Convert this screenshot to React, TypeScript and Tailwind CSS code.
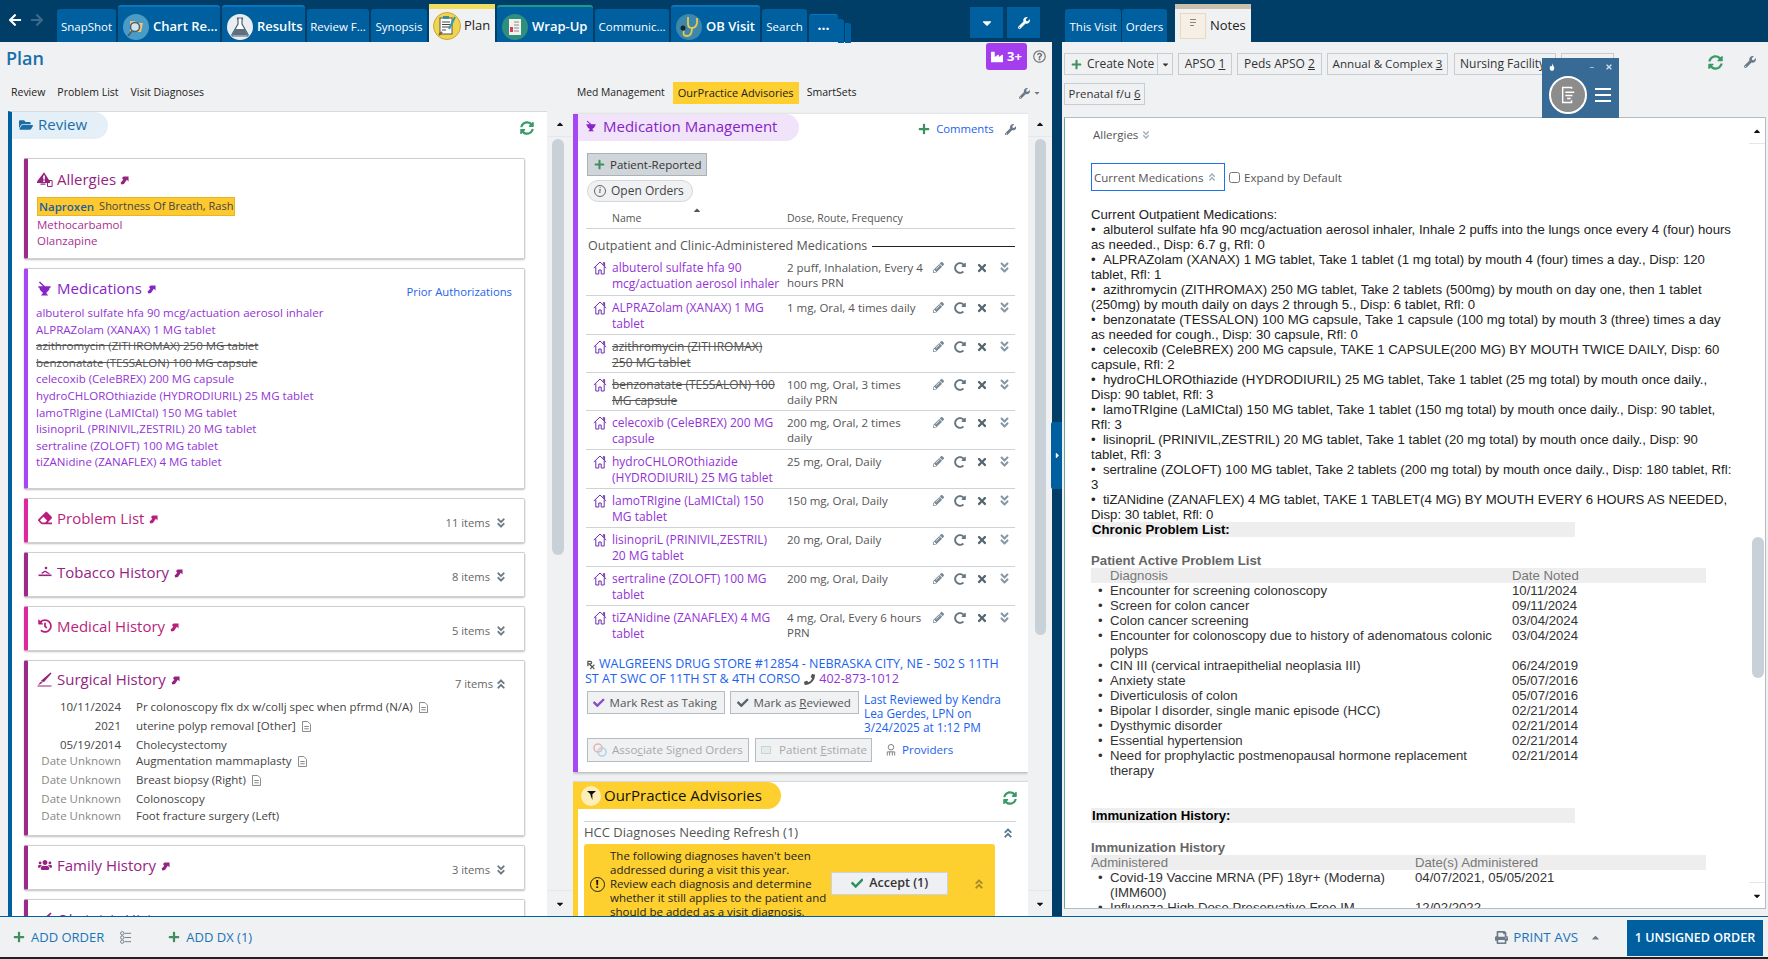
import * as React from "react";
import {
  FaPlus, FaWrench, FaPencilAlt, FaRedoAlt, FaTimes, FaAngleDoubleDown, FaAngleDoubleUp, FaSyncAlt,
  FaFolderOpen, FaCheck, FaPrint, FaPhoneAlt, FaHistory, FaUsers, FaArrowLeft, FaArrowRight, FaCaretDown,
  FaCaretUp, FaCaretRight, FaPrescription, FaEraser, FaRegQuestionCircle, FaIndustry,
} from "react-icons/fa";

const ui = "font-['Open_Sans',sans-serif]";
const arial = "font-['Liberation_Sans',Arial,sans-serif]";

function JumpArrow({ className }: { className?: string }) {
  return (
    <svg viewBox="0 0 10 10" className={`inline-block size-[9px] fill-current ${className ?? ""}`}>
      <path d="M4 0.5h5.5V6L7.6 4.2 4.4 8.8 1.6 9.5 0.6 7.5 3.6 4.1 2.2 2.3z" />
    </svg>
  );
}

function Mortar({ className }: { className?: string }) {
  return (
    <svg viewBox="0 0 14 16" className={`fill-current ${className ?? ""}`}>
      <path d="M1 1.5 2.2 0.5 7.5 5.5H13.5V7.2H12.6C12.2 9.6 10.8 11.2 9.2 11.9V13.2L11 15.5H3.2L5 13.2V11.9C3.2 11.2 1.9 9.6 1.5 7.2H0.5V5.5H5.4z" />
    </svg>
  );
}

function WarnBell({ className }: { className?: string }) {
  return (
    <svg viewBox="0 0 16 15" className={`fill-current ${className ?? ""}`}>
      <path d="M7 0.3 13 9.5V11H0V9.5z" />
      <rect x="6.2" y="3.5" width="1.7" height="4" fill="#fff" />
      <rect x="6.2" y="8.4" width="1.7" height="1.6" fill="#fff" />
      <path d="M10.5 8.5h4.6v6h-4.6z" fill="none" stroke="currentColor" strokeWidth="1" />
      <path d="M3.5 11.6h5v1.2h-5z" />
    </svg>
  );
}

function Smoke({ className }: { className?: string }) {
  return (
    <svg viewBox="0 0 14 14" className={`fill-current ${className ?? ""}`}>
      <rect x="0.5" y="9.5" width="13" height="1.6" />
      <path d="M3 8 7 5.5 12.5 8.8H10L7 7 4.5 8.8z" />
      <circle cx="8" cy="3" r="1.3" />
    </svg>
  );
}

function Scalpel({ className }: { className?: string }) {
  return (
    <svg viewBox="0 0 15 15" className={`fill-current ${className ?? ""}`}>
      <path d="M13.5 0.5 14.5 1.5 7 10 3.5 9.2z" />
      <path d="M3.2 10 6 10.6 1 13.2z" />
      <rect x="0.5" y="13.5" width="14" height="1" />
    </svg>
  );
}

function House() {
  return (
    <svg viewBox="0 0 14 14" className="mt-px size-[14px] shrink-0 fill-none stroke-[#6f2fa8]" strokeWidth="1">
      <path d="M0.8 7 7 1 13.2 7" />
      <path d="M2.8 5.6V13H5.8V9H8.2V13H11.2V5.6" />
      <path d="M10.3 3.8V1.6H11.6V5" />
    </svg>
  );
}

function DocIcon() {
  return (
    <svg viewBox="0 0 10 12" className="ml-[6px] inline-block h-[11px] w-[9px] fill-none stroke-[#7a7a7a]" strokeWidth="1">
      <path d="M0.5 0.5H6.5L9.5 3.5V11.5H0.5z" />
      <path d="M2.5 6H7.5M2.5 8.5H7.5" />
    </svg>
  );
}

function ChartIcon() {
  return (
    <svg viewBox="0 0 26 26" className="size-[26px] shrink-0">
      <circle cx="13" cy="13" r="13" fill="#4a9cc7" />
      <path d="M7 7H12L14 9H20L18 18H7z" fill="#f0c27a" />
      <circle cx="12" cy="13" r="4.5" fill="#cfe5f2" stroke="#47606f" strokeWidth="1.5" />
      <path d="M9 17 5 22" stroke="#47606f" strokeWidth="2" />
    </svg>
  );
}

function FlaskIcon() {
  return (
    <svg viewBox="0 0 26 26" className="size-[26px] shrink-0">
      <circle cx="13" cy="13" r="13" fill="#e9eef2" />
      <path d="M10.5 4H15.5V5H15V10L21 20.5Q21.5 22 20 22H6Q4.5 22 5 20.5L11 10V5H10.5z" fill="#fff" stroke="#4c6070" strokeWidth="1.2" />
      <path d="M8.3 15H17.7L20.4 20.5Q20.6 21.2 20 21.2H6Q5.4 21.2 5.6 20.5z" fill="#5b7182" />
    </svg>
  );
}

function PlanIcon() {
  return (
    <svg viewBox="0 0 28 28" className="size-[28px] shrink-0">
      <circle cx="14" cy="14" r="13.5" fill="#f0d34f" stroke="#c8a93a" />
      <rect x="7" y="6" width="12" height="16" fill="#fff" stroke="#555" />
      <rect x="10" y="4" width="6" height="3" fill="#3f8f8a" />
      <path d="M9 10H17M9 12.5H17M9 15H17M9 18H13" stroke="#444" strokeWidth="1.2" />
      <path d="M22 5 16 17" stroke="#2f9aa8" strokeWidth="2" />
      <path d="M6 23 9 20" stroke="#8a5a2a" strokeWidth="2" />
    </svg>
  );
}

function WrapIcon() {
  return (
    <svg viewBox="0 0 26 26" className="size-[26px] shrink-0">
      <circle cx="13" cy="13" r="13" fill="#2f8f7d" />
      <rect x="7" y="5" width="12" height="16" fill="#f3f3ee" />
      <path d="M12 8H17M12 11H17M12 14H17M12 17H17" stroke="#888" />
      <rect x="8" y="13" width="3" height="5" fill="#d83a6a" />
    </svg>
  );
}

function ObIcon() {
  return (
    <svg viewBox="0 0 26 26" className="size-[26px] shrink-0">
      <circle cx="13" cy="13" r="13" fill="#3b87ad" />
      <path d="M12 3V10Q12 14 16 14T21 9V4" fill="none" stroke="#e9c84a" strokeWidth="1.8" />
      <path d="M16 14Q16 22 11 22T8 17" fill="none" stroke="#e9c84a" strokeWidth="1.8" />
      <circle cx="7" cy="14" r="2.5" fill="#222" />
    </svg>
  );
}

const tabBase = "flex shrink-0 items-center rounded-t-[3px] bg-[#00609f] text-white";
const bigTab = "h-[37px] gap-1 border-t-2 pt-[4px] pl-[5px] text-[13px] font-semibold";
const smallTab = "h-[33px] justify-center pt-[2px]";

function LeftTabs() {
  return (
    <div className="flex h-[42px] items-end bg-[#003e68]">
      <div className="flex h-[42px] w-[57px] shrink-0 items-center gap-2 pb-[2px] pl-2 text-[14px]">
        <FaArrowLeft className="text-white" />
        <FaArrowRight className="text-[#3a6a8c]" />
      </div>
      <div className={`${ui} flex h-[38px] items-end gap-[2px] text-[11.5px]`}>
        <div className={`${tabBase} ${smallTab} w-[59px]`}>SnapShot</div>
        <div className={`${tabBase} ${bigTab} w-[102px] border-[#0a77bd]`}><ChartIcon /><span>Chart Re...</span></div>
        <div className={`${tabBase} ${bigTab} w-[83px] border-[#0a77bd]`}><FlaskIcon /><span>Results</span></div>
        <div className={`${tabBase} ${smallTab} w-[62px]`}>Review F...</div>
        <div className={`${tabBase} ${smallTab} w-[56px]`}>Synopsis</div>
        <div className="flex h-[38px] w-[66px] shrink-0 items-center gap-[3px] border-t-[5px] border-[#f2dc5d] bg-[#f0f1f3] pl-1 text-[13px] text-[#222]"><PlanIcon /><span>Plan</span></div>
        <div className={`${tabBase} ${bigTab} w-[96px] border-[#1f9a8a]`}><WrapIcon /><span>Wrap-Up</span></div>
        <div className={`${tabBase} ${smallTab} w-[74px]`}>Communic...</div>
        <div className={`${tabBase} ${bigTab} w-[89px] border-[#0a77bd]`}><ObIcon /><span>OB Visit</span></div>
        <div className={`${tabBase} ${smallTab} w-[45px]`}>Search</div>
        <div className="relative flex h-[28px] w-[29px] shrink-0 items-center justify-center rounded-t-[3px] border-t border-[#0a77bd] bg-[#00609f] pb-[8px] text-[14px] font-bold text-white">
          ...
          <div className="absolute top-[4px] left-[29px] h-[24px] w-[6px] rounded-tr-[3px] bg-[#00609f]" />
          <div className="absolute top-[8px] left-[36px] h-[20px] w-[6px] rounded-tr-[3px] bg-[#00609f]" />
        </div>
      </div>
      <div className="flex h-[42px] flex-1 items-start justify-end gap-1 pt-[7px] pr-[12px]">
        <div className="flex h-[31px] w-[33px] items-center justify-center bg-[#00609f] text-[14px] text-white"><FaCaretDown /></div>
        <div className="flex h-[31px] w-[33px] items-center justify-center bg-[#00609f] text-[12px] text-white"><FaWrench /></div>
      </div>
    </div>
  );
}

const cardTitle = "text-[15px] leading-[22px]";

function Card({ border, className, children }: { border: string; className: string; children: React.ReactNode }) {
  return (
    <div className={`relative ml-3 w-[501px] shrink-0 overflow-hidden rounded-[2px] border border-l-4 border-[#cfcfcf] bg-white shadow-[0_1px_2px_rgba(0,0,0,0.25)] ${border} ${className}`}>
      {children}
    </div>
  );
}

function CollapsedCard({ icon, title, color, border, items }: { icon: React.ReactNode; title: string; color: string; border: string; items: string }) {
  return (
    <Card border={border} className="h-[45px]">
      <div className={`flex items-center gap-[5px] pt-[8px] pl-[9px] ${color}`}>
        <span className="flex w-[15px] justify-center">{icon}</span>
        <span className={cardTitle}>{title}</span>
        <JumpArrow className="mt-[2px]" />
      </div>
      {items && (
        <div className="absolute top-[16px] right-[17px] flex items-center gap-[5px] text-[11.2px] text-[#666]">
          {items}
          <FaAngleDoubleDown className="text-[12px] text-[#6c7a86]" />
        </div>
      )}
    </Card>
  );
}

const prescribed = [
  { t: "albuterol sulfate hfa 90 mcg/actuation aerosol inhaler" },
  { t: "ALPRAZolam (XANAX) 1 MG tablet" },
  { t: "azithromycin (ZITHROMAX) 250 MG tablet", x: true },
  { t: "benzonatate (TESSALON) 100 MG capsule", x: true },
  { t: "celecoxib (CeleBREX) 200 MG capsule" },
  { t: "hydroCHLOROthiazide (HYDRODIURIL) 25 MG tablet" },
  { t: "lamoTRIgine (LaMICtal) 150 MG tablet" },
  { t: "lisinopriL (PRINIVIL,ZESTRIL) 20 MG tablet" },
  { t: "sertraline (ZOLOFT) 100 MG tablet" },
  { t: "tiZANidine (ZANAFLEX) 4 MG tablet" },
];

const surgical = [
  { d: "10/11/2024", t: "Pr colonoscopy flx dx w/collj spec when pfrmd (N/A)", doc: true, h: "h-[19px]" },
  { d: "2021", t: "uterine polyp removal [Other]", doc: true, h: "h-[19px]" },
  { d: "05/19/2014", t: "Cholecystectomy", h: "h-[16px]" },
  { d: "Date Unknown", t: "Augmentation mammaplasty", doc: true, gray: true, h: "h-[19px]" },
  { d: "Date Unknown", t: "Breast biopsy (Right)", doc: true, gray: true, h: "h-[19px]" },
  { d: "Date Unknown", t: "Colonoscopy", gray: true, h: "h-[17px]" },
  { d: "Date Unknown", t: "Foot fracture surgery (Left)", gray: true, h: "h-[17px]" },
];

function ReviewPanel() {
  return (
    <div className={`${ui} flex h-full w-[539px] shrink-0 flex-col gap-[9px] overflow-hidden border-t border-l-4 border-[#d9dadc] border-l-[#00609f] bg-white text-[11.5px]`}>
      <div className="relative mb-[10px] h-[27px] shrink-0">
        <div className="flex h-[27px] w-[96px] items-center gap-[5px] rounded-r-full bg-[#e5eff7] pb-[2px] pl-[7px] text-[15px] text-[#1a6ea8]">
          <FaFolderOpen className="text-[14px] text-[#1a6ea8]" />
          Review
        </div>
        <FaSyncAlt className="absolute top-[9px] right-[13px] text-[14px] text-[#3a9a6a]" />
      </div>

      <Card border="border-l-[#9c2a8a]" className="h-[101px]">
        <div className="flex items-center gap-[4px] pt-[9px] pl-[9px] text-[#96237f]">
          <WarnBell className="h-[15px] w-[16px]" />
          <span className={cardTitle}>Allergies</span>
          <JumpArrow className="mt-[2px]" />
        </div>
        <div className="mt-[7px] ml-[9px] flex h-[19px] w-[198px] items-center gap-[5px] border border-[#e5b62a] bg-[#fdc92e] pl-[1px] whitespace-nowrap">
          <span className="font-semibold text-[#1c5fa0]">Naproxen</span>
          <span className="text-[11px] text-[#444]">Shortness Of Breath, Rash</span>
        </div>
        <div className="mt-[1px] ml-[9px] leading-[16px] text-[#a8328f]">Methocarbamol<br />Olanzapine</div>
      </Card>

      <Card border="border-l-[#a647f5]" className="h-[221px]">
        <div className="flex items-center gap-[5px] pt-[8px] pl-[9px] text-[#8724c8]">
          <Mortar className="h-[15px] w-[15px]" />
          <span className={cardTitle}>Medications</span>
          <JumpArrow className="mt-[2px]" />
        </div>
        <div className="absolute top-[15px] right-[12px] text-[11.3px] text-[#2563eb]">Prior Authorizations</div>
        <div className="mt-[6px] ml-[8px] leading-[16.6px] text-[#9333d6]">
          {prescribed.map((m) => (
            <div key={m.t} className={m.x ? "text-[#555] line-through" : ""}>{m.t}</div>
          ))}
        </div>
      </Card>

      <CollapsedCard icon={<FaEraser className="text-[14px]" />} title="Problem List" color="text-[#b81f7d]" border="border-l-[#e0289e]" items="11 items" />
      <CollapsedCard icon={<Smoke className="size-[14px]" />} title="Tobacco History" color="text-[#96237f]" border="border-l-[#9c2a8a]" items="8 items" />
      <CollapsedCard icon={<FaHistory className="text-[14px]" />} title="Medical History" color="text-[#b81f7d]" border="border-l-[#e0289e]" items="5 items" />

      <Card border="border-l-[#9c2a8a]" className="h-[176px]">
        <div className="flex items-center gap-[5px] pt-[7px] pl-[9px] text-[#96237f]">
          <Scalpel className="size-[15px]" />
          <span className={cardTitle}>Surgical History</span>
          <JumpArrow className="mt-[2px]" />
        </div>
        <div className="absolute top-[15px] right-[17px] flex items-center gap-[2px] text-[11.2px] text-[#666]">
          7 items
          <FaAngleDoubleUp className="text-[12px] text-[#6c7a86]" />
        </div>
        <div className="mt-[9px] leading-[16px] text-[#444]">
          {surgical.map((s) => (
            <div key={s.d + s.t} className={`flex items-start ${s.h}`}>
              <span className={`w-[93px] text-right ${s.gray ? "text-[#888]" : ""}`}>{s.d}</span>
              <span className="ml-[15px]">{s.t}</span>
              {s.doc && <span><DocIcon /></span>}
            </div>
          ))}
        </div>
      </Card>

      <CollapsedCard icon={<FaUsers className="text-[14px]" />} title="Family History" color="text-[#96237f]" border="border-l-[#9c2a8a]" items="3 items" />
      <CollapsedCard icon={<Scalpel className="size-[15px]" />} title="Obstetric History" color="text-[#96237f]" border="border-l-[#9c2a8a]" items="" />
    </div>
  );
}

function ScrollBar({ className, thumb }: { className: string; thumb: string }) {
  return (
    <div className={`flex shrink-0 flex-col items-center ${className}`}>
      <div className="flex h-[26px] w-full items-center justify-center border-b border-[#e6e7e9] text-[10px] text-[#111]"><FaCaretUp /></div>
      <div className="flex-1">
        <div className={`rounded-[6px] bg-[#c9d1d8] ${thumb}`} />
      </div>
      <div className="flex h-[26px] w-full items-center justify-center border-t border-[#e6e7e9] text-[10px] text-[#111]"><FaCaretDown /></div>
    </div>
  );
}

const meds = [
  { name: ["albuterol sulfate hfa 90", "mcg/actuation aerosol inhaler"], dose: ["2 puff, Inhalation, Every 4", "hours PRN"], h: "h-[40px]" },
  { name: ["ALPRAZolam (XANAX) 1 MG", "tablet"], dose: ["1 mg, Oral, 4 times daily"], h: "h-[39px]" },
  { name: ["azithromycin (ZITHROMAX)", "250 MG tablet"], dose: [], x: true, h: "h-[38px]" },
  { name: ["benzonatate (TESSALON) 100", "MG capsule"], dose: ["100 mg, Oral, 3 times", "daily PRN"], x: true, h: "h-[38px]" },
  { name: ["celecoxib (CeleBREX) 200 MG", "capsule"], dose: ["200 mg, Oral, 2 times", "daily"], h: "h-[39px]" },
  { name: ["hydroCHLOROthiazide", "(HYDRODIURIL) 25 MG tablet"], dose: ["25 mg, Oral, Daily"], h: "h-[39px]" },
  { name: ["lamoTRIgine (LaMICtal) 150", "MG tablet"], dose: ["150 mg, Oral, Daily"], h: "h-[39px]" },
  { name: ["lisinopriL (PRINIVIL,ZESTRIL)", "20 MG tablet"], dose: ["20 mg, Oral, Daily"], h: "h-[39px]" },
  { name: ["sertraline (ZOLOFT) 100 MG", "tablet"], dose: ["200 mg, Oral, Daily"], h: "h-[39px]" },
  { name: ["tiZANidine (ZANAFLEX) 4 MG", "tablet"], dose: ["4 mg, Oral, Every 6 hours", "PRN"], h: "h-[39px]", last: true },
];

function MedRow({ m }: { m: (typeof meds)[number] }) {
  return (
    <div className={`ml-[8px] flex w-[429px] items-start pt-[4px] ${m.h} ${m.last ? "" : "border-b border-[#cfd3d7]"}`}>
      <div className="flex w-[26px] shrink-0 justify-end pr-[5px]"><House /></div>
      <div className={`w-[175px] shrink-0 text-[12px] leading-[16px] ${m.x ? "text-[#555] line-through" : "text-[#9333d6]"}`}>
        {m.name.map((l) => <div key={l}>{l}</div>)}
      </div>
      <div className="w-[146px] shrink-0 text-[11.5px] leading-[15px] text-[#555]">
        {m.dose.map((l) => <div key={l}>{l}</div>)}
      </div>
      <div className="flex items-center gap-[10px] pt-px text-[#66757f]">
        <FaPencilAlt className="size-[11px] text-[#7b8a97]" />
        <FaRedoAlt className="size-[12px]" />
        <FaTimes className="size-[12px] text-[#55656f]" />
        <FaAngleDoubleDown className="size-[13px] text-[#8796a3]" />
      </div>
    </div>
  );
}

function BtnBox({ className, children }: { className: string; children: React.ReactNode }) {
  return <div className={`flex items-center border border-[#b6bcc2] bg-[#f0f1f3] text-[11.6px] whitespace-nowrap ${className}`}>{children}</div>;
}

function MedPanel() {
  return (
    <div className={`${ui} relative h-[658px] shrink-0 overflow-hidden border-l-[5px] border-[#a647f5] bg-white shadow-[0_1px_3px_rgba(0,0,0,0.3)]`}>
      <div className="flex h-[27px] w-[221px] items-center gap-[7px] rounded-r-full bg-[#f0e3fa] pb-[3px] pl-[8px] text-[15px] text-[#8724c8]">
        <Mortar className="h-[14px] w-[10px]" />
        Medication Management
      </div>
      <div className="absolute top-[7px] right-[12px] flex items-center gap-[6px] text-[11.3px] text-[#1a62f0]">
        <FaPlus className="text-[12px] text-[#3f8f5f]" />
        <span>Comments</span>
        <FaWrench className="ml-[5px] text-[#6b7a89]" />
      </div>

      <div className="mt-[12px] ml-[9px] flex h-[23px] w-[120px] items-center gap-[5px] border border-[#aab1b8] bg-[#d0d5da] pl-[6px] text-[11.5px] whitespace-nowrap text-[#333]">
        <FaPlus className="text-[11px] text-[#3f8f5f]" />Patient-Reported
      </div>
      <div className="mt-[4px] ml-[9px] flex h-[22px] w-[106px] items-center gap-[5px] rounded-full border border-[#d5d8db] bg-[#f0f1f3] pl-[6px] text-[12px] font-medium whitespace-nowrap text-[#444]">
        <span className="flex size-[12px] items-center justify-center rounded-full border border-[#666] font-serif text-[9px] italic">i</span>Open Orders
      </div>
      <div className="relative ml-[8px] flex h-[27px] w-[429px] items-end border-b border-[#cfd3d7] pb-[1px] text-[10.5px] text-[#555]">
        <span className="ml-[26px] w-[175px]">Name</span>
        <span>Dose, Route, Frequency</span>
        <FaCaretUp className="absolute top-[3px] left-[106px] text-[10px] text-[#555]" />
      </div>
      <div className="ml-[10px] flex h-[27px] w-[427px] items-center gap-[5px] pt-[7px] text-[12.5px] text-[#555]">
        <span className="shrink-0">Outpatient and Clinic-Administered Medications</span>
        <div className="h-px flex-1 bg-[#222]" />
      </div>
      {meds.map((m) => <MedRow key={m.name[0]} m={m} />)}

      <div className="mt-[11px] ml-[7px] w-[430px] text-[12.5px] leading-[15px] text-[#1a62f0]">
        <FaPrescription className="mr-[3px] ml-[1px] inline size-[10px] text-[#555]" />
        WALGREENS DRUG STORE #12854 - NEBRASKA CITY, NE - 502 S 11TH ST AT SWC OF 11TH ST &amp; 4TH CORSO
        <FaPhoneAlt className="mx-[4px] inline size-[11px] -scale-x-100 text-[#555]" />
        <span className="text-[#9333d6]">402-873-1012</span>
      </div>
      <div className="mt-[5px] ml-[9px] flex items-start">
        <BtnBox className="h-[23px] w-[138px] gap-[5px] pl-[5px] text-[#555]"><FaCheck className="text-[#8a4fc0]" />Mark Rest as Taking</BtnBox>
        <BtnBox className="ml-[5px] h-[23px] w-[129px] gap-[5px] pl-[6px] text-[#555]"><FaCheck className="text-[#55656f]" /><span>Mark as <u>R</u>eviewed</span></BtnBox>
        <div className="ml-[5px] w-[140px] pt-[1px] text-[11.8px] leading-[14px] text-[#1a62f0]">Last Reviewed by Kendra Lea Gerdes, LPN on 3/24/2025 at 1:12 PM</div>
      </div>
      <div className="mt-[4px] ml-[9px] flex items-center">
        <BtnBox className="h-[24px] w-[162px] gap-[5px] pl-[5px] text-[#a9a9a9]">
          <svg viewBox="0 0 14 14" className="size-[14px] fill-none" strokeWidth="1.6"><circle cx="5" cy="5" r="4" stroke="#e7b3b3" /><circle cx="9" cy="9" r="4" stroke="#b5d2e8" /></svg>
          <span>Asso<u>c</u>iate Signed Orders</span>
        </BtnBox>
        <BtnBox className="ml-[6px] h-[24px] w-[117px] gap-[8px] pl-[5px] text-[#a9a9a9]">
          <div className="h-[8px] w-[10px] border border-[#c9d6d0] bg-[#e5ece8]" />
          <span>Patient <u>E</u>stimate</span>
        </BtnBox>
        <svg viewBox="0 0 10 13" className="ml-[14px] h-[12px] w-[10px] fill-none stroke-[#777]"><circle cx="5" cy="3.5" r="3" /><path d="M1 12.5V8.5H9V12.5M3.5 8.5V12.5M6.5 8.5V12.5" /></svg>
        <span className="ml-[6px] text-[11.6px] text-[#1a62f0]">Providers</span>
      </div>
    </div>
  );
}

const advisoryLines = [
  "The following diagnoses haven't been",
  "addressed during a visit this year.",
  "Review each diagnosis and determine",
  "whether it still applies to the patient and",
  "should be added as a visit diagnosis.",
];

function AdvisoryPanel() {
  return (
    <div className={`${ui} relative mt-[10px] flex-1 overflow-hidden border-l-[5px] border-[#fdd02f] bg-white shadow-[0_0_2px_rgba(0,0,0,0.3)]`}>
      <div className="-ml-[5px] flex h-[27px] w-[208px] items-center gap-[3px] rounded-r-full bg-[#fdd02f] pl-[8px] text-[15px] text-[#111]">
        <span className="flex size-[20px] shrink-0 items-center justify-center rounded-full bg-[#fbeeb8]">
          <svg viewBox="0 0 10 11" className="h-[11px] w-[9px] fill-[#111]"><path d="M0 0.5H10L6 4V10.5L4.5 7 3.600 3.800z" /></svg>
        </span>
        OurPractice Advisories
      </div>
      <FaSyncAlt className="absolute top-[9px] right-[11px] text-[14px] text-[#3a9a6a]" />
      <div className="mt-[12px] ml-[6px] flex h-[23px] w-[432px] items-center justify-between border-t border-[#cfd3d7] pr-[2px] pb-[1px] text-[13px] text-[#555]">
        HCC Diagnoses Needing Refresh (1)
        <FaAngleDoubleUp className="text-[12px] text-[#5b7a92]" />
      </div>
      <div className="ml-[6px] flex h-[76px] w-[411px] rounded-t-[3px] bg-[#fdd02f] pt-[5px]">
        <div className="flex h-[70px] w-[26px] shrink-0 items-center justify-center">
          <span className="flex size-[15px] items-center justify-center rounded-full border border-[#222] text-[11px] font-bold">!</span>
        </div>
        <div className="w-[221px] shrink-0 text-[11.5px] leading-[14px] whitespace-nowrap text-[#222]">
          {advisoryLines.map((l) => <div key={l}>{l}</div>)}
        </div>
        <div className="mt-[23px] flex h-[23px] w-[117px] shrink-0 items-center justify-center gap-[6px] border border-[#cfd3d7] bg-[#eef0f3] text-[12.5px] font-semibold text-[#333]">
          <FaCheck className="text-[#2d8f5f]" />Accept (1)
        </div>
        <FaAngleDoubleUp className="mt-[29px] ml-[25px] text-[12px] text-[#a98a2a]" />
      </div>
    </div>
  );
}

const NoteBtn = ({ className, children }: { className: string; children: React.ReactNode }) => (
  <div className={`flex h-[22px] shrink-0 items-center justify-center border border-[#c8ccd0] bg-[#f0f1f3] text-[12px] text-[#333] ${className}`}>{children}</div>
);

const outpatient = [
  "•\u00a0\u00a0albuterol sulfate hfa 90 mcg/actuation aerosol inhaler, Inhale 2 puffs into the lungs once every 4 (four) hours as needed., Disp: 6.7 g, Rfl: 0",
  "•\u00a0\u00a0ALPRAZolam (XANAX) 1 MG tablet, Take 1 tablet (1 mg total) by mouth 4 (four) times a day., Disp: 120 tablet, Rfl: 1",
  "•\u00a0\u00a0azithromycin (ZITHROMAX) 250 MG tablet, Take 2 tablets (500mg) by mouth on day one, then 1 tablet (250mg) by mouth daily on days 2 through 5., Disp: 6 tablet, Rfl: 0",
  "•\u00a0\u00a0benzonatate (TESSALON) 100 MG capsule, Take 1 capsule (100 mg total) by mouth 3 (three) times a day as needed for cough., Disp: 30 capsule, Rfl: 0",
  "•\u00a0\u00a0celecoxib (CeleBREX) 200 MG capsule, TAKE 1 CAPSULE(200 MG) BY MOUTH TWICE DAILY, Disp: 60 capsule, Rfl: 2",
  "•\u00a0\u00a0hydroCHLOROthiazide (HYDRODIURIL) 25 MG tablet, Take 1 tablet (25 mg total) by mouth once daily., Disp: 90 tablet, Rfl: 3",
  "•\u00a0\u00a0lamoTRIgine (LaMICtal) 150 MG tablet, Take 1 tablet (150 mg total) by mouth once daily., Disp: 90 tablet, Rfl: 3",
  "•\u00a0\u00a0lisinopriL (PRINIVIL,ZESTRIL) 20 MG tablet, Take 1 tablet (20 mg total) by mouth once daily., Disp: 90 tablet, Rfl: 3",
  "•\u00a0\u00a0sertraline (ZOLOFT) 100 MG tablet, Take 2 tablets (200 mg total) by mouth once daily., Disp: 180 tablet, Rfl: 3",
  "•\u00a0\u00a0tiZANidine (ZANAFLEX) 4 MG tablet, TAKE 1 TABLET(4 MG) BY MOUTH EVERY 6 HOURS AS NEEDED, Disp: 30 tablet, Rfl: 0",
];

const problems = [
  ["Encounter for screening colonoscopy", "10/11/2024"],
  ["Screen for colon cancer", "09/11/2024"],
  ["Colon cancer screening", "03/04/2024"],
  ["Encounter for colonoscopy due to history of adenomatous colonic polyps", "03/04/2024"],
  ["CIN III (cervical intraepithelial neoplasia III)", "06/24/2019"],
  ["Anxiety state", "05/07/2016"],
  ["Diverticulosis of colon", "05/07/2016"],
  ["Bipolar I disorder, single manic episode (HCC)", "02/21/2014"],
  ["Dysthymic disorder", "02/21/2014"],
  ["Essential hypertension", "02/21/2014"],
  ["Need for prophylactic postmenopausal hormone replacement therapy", "02/21/2014"],
];

function Widget() {
  return (
    <div className="absolute top-[16px] left-[480px] h-[60px] w-[77px] bg-[#376a94] text-white">
      <div className="flex h-[18px] items-center justify-between pr-[6px] pl-[7px] text-[9px]">
        <svg viewBox="0 0 8 10" className="h-[8px] w-[6px] fill-white"><path d="M4 0C5 3 7 4 7 6.500 7 8.500 5.500 10 4 10S1 8.500 1 6.500C1 5 2 4 2.500 3 3 4 3.500 4 4 4z" /></svg>
        <div className="flex items-center gap-[11px] text-[#c9d9e6]"><span>–</span><FaTimes className="text-[8px]" /></div>
      </div>
      <div className="flex items-center gap-[8px] pl-[7px]">
        <span className="flex size-[38px] items-center justify-center rounded-full border-2 border-white bg-[#8c8c8c]">
          <svg viewBox="0 0 18 22" className="h-[20px] w-[16px] fill-none stroke-white" strokeWidth="1.6">
            <path d="M13 4V2.500H3V19.500H13V17" />
            <path d="M6 8H16M6 11.500H14M8 15H12" />
          </svg>
        </span>
        <div className="flex w-[16px] flex-col gap-[4px]">
          <div className="h-[2px] bg-white" /><div className="h-[2px] bg-white" /><div className="h-[2px] bg-white" />
        </div>
      </div>
    </div>
  );
}

function RightPane() {
  return (
    <div className="flex w-[706px] shrink-0 flex-col">
      <div className={`${ui} flex h-[42px] items-end gap-px pl-[3px] text-[11.5px] text-white`}>
        <div className="flex h-[33px] w-[56px] items-center justify-center rounded-t-[3px] bg-[#00609f] pt-[2px]">This Visit</div>
        <div className="flex h-[33px] w-[45px] items-center justify-center rounded-t-[3px] bg-[#00609f] pt-[2px]">Orders</div>
        <div className="ml-[7px] flex h-[38px] w-[76px] items-center gap-[4px] border-t-[5px] border-[#cbbfae] bg-[#f0f1f3] pl-[5px] text-[13px] text-[#222]">
          <div className="flex h-[26px] w-[26px] flex-col items-start gap-[2px] border border-[#e5d9c5] bg-[#f6efe3] py-[5px] pl-[9px]">
            <div className="h-px w-[6px] bg-[#888]" /><div className="h-px w-[6px] bg-[#888]" /><div className="h-px w-[4px] bg-[#888]" />
          </div>
          Notes
        </div>
      </div>
      <div className="relative flex flex-1 flex-col overflow-hidden bg-[#f0f1f3]">
        <Widget />
        <div className={`${ui} flex h-[41px] items-start gap-[5px] pt-[11px] pl-[2px]`}>
          <NoteBtn className="w-[109px]">
            <div className="flex flex-1 items-center gap-[5px] pl-[6px]"><FaPlus className="text-[11px] text-[#3f8f5f]" />Create Note</div>
            <div className="flex h-full w-[15px] items-center justify-center border-l border-[#c8ccd0] text-[9px]"><FaCaretDown /></div>
          </NoteBtn>
          <NoteBtn className="w-[54px]"><span>APSO <u>1</u></span></NoteBtn>
          <NoteBtn className="w-[85px]"><span>Peds APSO <u>2</u></span></NoteBtn>
          <NoteBtn className="w-[121px]"><span className="text-[11.6px]">Annual &amp; Complex <u>3</u></span></NoteBtn>
          <NoteBtn className="ml-px w-[102px] !justify-start pl-[5px]">Nursing Facility</NoteBtn>
          <NoteBtn className="w-[53px]"> </NoteBtn>
          <FaSyncAlt className="mt-[2px] ml-[89px] text-[15px] text-[#3a9a6a]" />
          <FaWrench className="mt-[3px] ml-[16px] text-[12px] text-[#6b7a89]" />
        </div>
        <div className={`${ui} flex h-[34px] items-start pl-[2px]`}>
          <NoteBtn className="w-[81px]"><span className="text-[11.4px]">Prenatal f/u <u>6</u></span></NoteBtn>
        </div>

        <div className={`${arial} mr-[2px] ml-[2px] flex h-[792px] shrink-0 border border-[#b5bcc2] border-l-[#6fa89a] bg-white text-[13.2px] leading-[15px] text-[#333]`}>
          <div className="h-full flex-1 overflow-hidden pl-[26px]">
            <div className={`${ui} flex h-[35px] items-center gap-[3px] pb-[2px] pl-[2px] text-[11.5px] text-[#555]`}>
              Allergies <FaAngleDoubleDown className="text-[10px] text-[#9fb1c0]" />
            </div>
            <div className="mt-[10px] flex h-[28px] items-center gap-[3px]">
              <div className={`${ui} flex h-[28px] w-[134px] items-center gap-[4px] border border-[#1a73e8] pl-[2px] text-[11.5px] text-[#555]`}>
                Current Medications <FaAngleDoubleUp className="text-[10px] text-[#9fb1c0]" />
              </div>
              <input type="checkbox" readOnly className="ml-[1px] size-[11px]" />
              <span className={`${ui} ml-[1px] text-[11.5px] text-[#555]`}>Expand by Default</span>
            </div>
            <div className="mt-[16px] w-[645px] text-[#222]">
              <div>Current Outpatient Medications:</div>
              {outpatient.map((l) => <div key={l}>{l}</div>)}
            </div>
            <div className="h-[15px] w-[484px] bg-[#eeeeee] pl-[1px] font-bold text-black">Chronic Problem List:</div>
            <div className="mt-[16px] font-bold text-[#666]">Patient Active Problem List</div>
            <div className="flex h-[15px] w-[615px] bg-[#eeeeee] text-[#777]">
              <span className="ml-[19px] w-[402px]">Diagnosis</span>
              <span>Date Noted</span>
            </div>
            {problems.map(([d, n]) => (
              <div key={d} className="flex w-[615px]">
                <span className="w-[19px] pl-[7px]">•</span>
                <span className="w-[388px] shrink-0">{d}</span>
                <span className="ml-[14px]">{n}</span>
              </div>
            ))}
            <div className="mt-[30px] h-[15px] w-[484px] bg-[#eeeeee] pl-[1px] font-bold text-black">Immunization History:</div>
            <div className="mt-[17px] font-bold text-[#666]">Immunization History</div>
            <div className="flex h-[15px] w-[615px] bg-[#eeeeee] text-[#777]">
              <span className="w-[324px]">Administered</span>
              <span>Date(s) Administered</span>
            </div>
            <div className="flex w-[615px]">
              <span className="w-[19px] pl-[7px]">•</span>
              <span className="w-[280px] shrink-0">Covid-19 Vaccine MRNA (PF) 18yr+ (Moderna) (IMM600)</span>
              <span className="ml-[25px]">04/07/2021, 05/05/2021</span>
            </div>
            <div className="flex w-[615px]">
              <span className="w-[19px] pl-[7px]">•</span>
              <span className="w-[280px] shrink-0">Influenza High Dose Preservative Free IM</span>
              <span className="ml-[25px]">12/02/2022</span>
            </div>
          </div>
          <ScrollBar className="h-full w-[16px]" thumb="mt-[393px] ml-[1px] h-[141px] w-[12px]" />
        </div>
      </div>
    </div>
  );
}

export default function App() {
  return (
    <div className="flex h-[959px] w-[1768px] flex-col overflow-hidden bg-[#003e68]">
      <div className="flex h-[916px] shrink-0">
        <div className="flex w-[1052px] shrink-0 flex-col">
          <LeftTabs />
          <div className="flex flex-1 flex-col overflow-hidden bg-[#f0f1f3]">
            <div className={`${ui} flex h-[40px] shrink-0 items-start justify-between pr-[6px]`}>
              <div className="pt-[3px] pl-[6px] text-[18px] font-semibold text-[#1a6ea8]">Plan</div>
              <div className="flex items-center gap-[6px] pt-px">
                <div className="flex h-[27px] w-[41px] items-center justify-center gap-[4px] rounded-[3px] bg-[#a33ded] text-[13px] font-bold text-white"><FaIndustry className="text-[12px]" />3+</div>
                <FaRegQuestionCircle className="text-[13px] text-[#777]" />
              </div>
            </div>
            <div className={`${ui} flex h-[22px] shrink-0 items-center text-[10.5px] text-[#222]`}>
              <div className="flex w-[577px] gap-[12px] pl-[11px]"><span>Review</span><span>Problem List</span><span>Visit Diagnoses</span></div>
              <span className="text-[10.3px]">Med Management</span>
              <span className="ml-[8px] flex h-[22px] w-[126px] items-center justify-center bg-[#fdd02f] text-[11px]">OurPractice Advisories</span>
              <span className="ml-[8px]">SmartSets</span>
              <div className="ml-auto flex items-center gap-[3px] pr-[11px] text-[#6b7a89]"><FaWrench className="text-[11px]" /><FaCaretDown className="text-[8px]" /></div>
            </div>
            <div className="mt-[7px] flex h-[805px] pl-2">
              <ReviewPanel />
              <ScrollBar className="h-full w-[26px]" thumb="mr-[4px] mt-[2px] h-[416px] w-[12px]" />
              <div className="flex h-full w-[455px] shrink-0 flex-col overflow-hidden pt-[3px]">
                <MedPanel />
                <AdvisoryPanel />
              </div>
              <ScrollBar className="h-full w-[24px]" thumb="mt-[2px] h-[496px] w-[11px]" />
            </div>
          </div>
        </div>
        <div className="relative w-[10px] shrink-0 bg-[#003e68]">
          <div className="absolute top-[422px] -left-px flex h-[67px] w-[12px] items-center justify-center rounded-[2px] bg-[#00609f] text-[9px] text-white"><FaCaretRight /></div>
        </div>
        <RightPane />
      </div>
      <div className={`${ui} flex h-[41px] shrink-0 items-center border-t border-[#00609f] bg-[#f0f1f3] pr-[5px] text-[13px] text-[#1a74b8]`}>
        <FaPlus className="ml-[13px] text-[12px] text-[#3f8f5f]" />
        <span className="ml-[6px] pt-[1px]">ADD ORDER</span>
        <svg viewBox="0 0 12 14" className="ml-[15px] h-[13px] w-[13px] fill-none stroke-[#6b7a89]"><circle cx="2.5" cy="2.500" r="1.800" /><circle cx="2.5" cy="7" r="1.800" /><circle cx="2.5" cy="11.500" r="1.800" /><path d="M5 2.500H12M5 7H12M5 11.500H12" /></svg>
        <FaPlus className="ml-[36px] text-[12px] text-[#3f8f5f]" />
        <span className="ml-[6px] pt-[1px]">ADD DX (1)</span>
        <FaPrint className="ml-auto text-[13px] text-[#6b7a89]" />
        <span className="ml-[5px] pt-[1px] text-[13.4px]">PRINT AVS</span>
        <FaCaretUp className="ml-[12px] text-[11px] text-[#6b7a89]" />
        <div className="mt-[2px] ml-[26px] flex h-[36px] w-[136px] items-center justify-center bg-[#00609f] text-[12.5px] font-semibold text-white">1 UNSIGNED ORDER</div>
      </div>
      <div className="h-[2px] bg-[#222]" />
    </div>
  );
}
